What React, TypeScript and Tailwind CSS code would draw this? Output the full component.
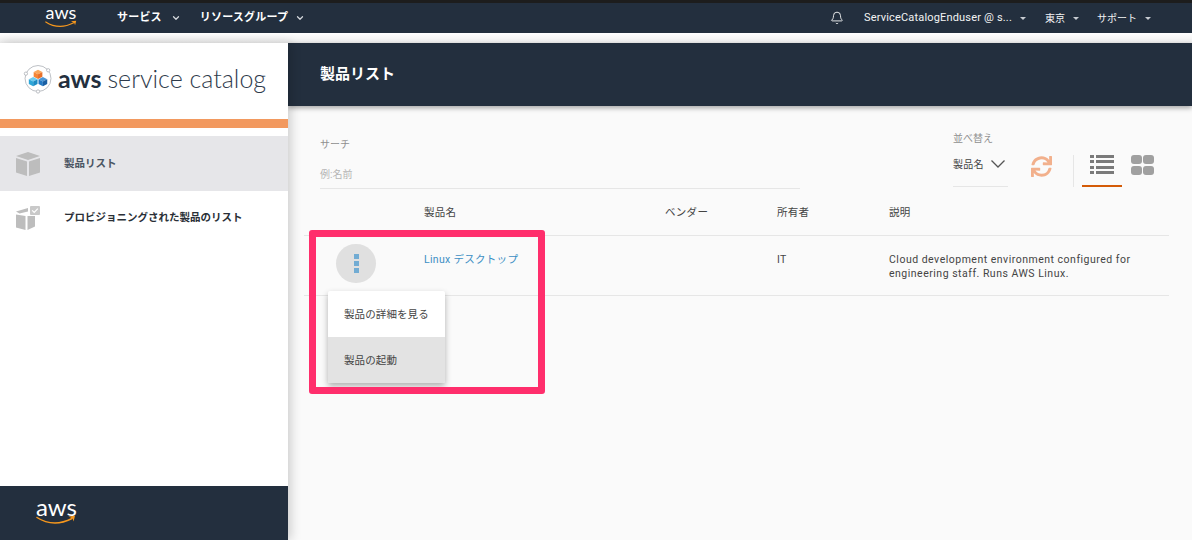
import { Bell, ChevronDown } from 'lucide-react'
import { FaSync } from 'react-icons/fa'

const font = { jp: "font-['Roboto','Noto_Sans_CJK_JP',sans-serif]" }

function Caret() {
  return <span className="ml-[8px] inline-block h-0 w-0 border-x-[3px] border-t-[3px] border-x-transparent border-t-[#c8ccd2]" />
}

function Smile({ className }: { className: string }) {
  return (
    <svg viewBox="0 0 40 10" className={className} fill="none">
      <path d="M1 2.5C7 6.5 13 8 19 8c6 0 11-1.5 17-4.5" stroke="#f7981d" strokeWidth="1.5" strokeLinecap="round" />
      <path d="M32.5 1.6 39 .8 37.6 6.6 36.6 3.6z" fill="#f7981d" />
    </svg>
  )
}

function AwsLogo({ big }: { big?: boolean }) {
  return (
    <div className={big ? 'relative h-[26px] w-[40px]' : 'relative h-[22px] w-[32px]'}>
      <span
        className={`absolute left-0 right-0 text-center font-['Lato',sans-serif] leading-none text-white ${
          big ? 'top-[-5px] text-[24px]' : 'top-[-4px] text-[18px]'
        }`}
      >
        aws
      </span>
      <Smile className={big ? 'absolute left-0 top-[15px] h-[10px] w-[40px]' : 'absolute left-0 top-[13px] h-[8px] w-[32px]'} />
    </div>
  )
}

function Cube({ x, y, top, left, right }: { x: number; y: number; top: string; left: string; right: string }) {
  return (
    <g transform={`translate(${x} ${y})`}>
      <path d="M0-4.5 4.5-2.2 0 0-4.5-2.2z" fill={top} />
      <path d="M-4.5-2.2 0 0V5L-4.5 2.8z" fill={left} />
      <path d="M4.5-2.2 0 0V5L4.5 2.8z" fill={right} />
    </g>
  )
}

function CatalogMark() {
  return (
    <svg viewBox="0 0 32 32" className="h-[31px] w-[31px] shrink-0">
      <circle cx="15.5" cy="16" r="13.4" fill="none" stroke="#a9aeb4" strokeWidth="0.8" />
      <circle cx="3" cy="11" r="1.7" fill="#fff" stroke="#a9aeb4" strokeWidth="0.8" />
      <circle cx="26" cy="7.5" r="1.7" fill="#fff" stroke="#a9aeb4" strokeWidth="0.8" />
      <circle cx="15.5" cy="29.4" r="1.7" fill="#fff" stroke="#a9aeb4" strokeWidth="0.8" />
      <Cube x={15.5} y={11.5} top="#f9a65a" left="#f58536" right="#e8702a" />
      <Cube x={10.5} y={19} top="#6fcbee" left="#2ea6d8" right="#1c8cc4" />
      <Cube x={20.5} y={19} top="#4a97d6" left="#2379c4" right="#1a5fa3" />
    </svg>
  )
}

function BoxIcon() {
  return (
    <svg viewBox="0 0 24 24" className="h-[24px] w-[24px]" fill="#bdbdbd">
      <path d="M12 0 24 4 12 8 0 4z" />
      <path d="M0 6 11 9.6V24L0 20.4z" />
      <path d="M24 6 13 9.6V24l11-3.6z" />
    </svg>
  )
}

function BoxCheckIcon() {
  return (
    <svg viewBox="0 0 24 24" className="h-[24px] w-[24px]" fill="#bdbdbd">
      <path d="M0 5.5 12 2v3.5L3.5 7.4z" />
      <path d="M0 8.5 9.5 10v14L0 21.5z" />
      <path d="M11.5 10 H19 V20.5L11.5 24z" />
      <rect x="14" y="0" width="10" height="9" rx="1" fill="#c9c9c9" />
      <path d="M16.2 4.4 18.2 6.4 21.8 2.6" fill="none" stroke="#fff" strokeWidth="1.2" />
    </svg>
  )
}

function ListIcon() {
  return (
    <div className="flex w-[24px] flex-col gap-[2.3px]">
      {[0, 1, 2, 3].map((i) => (
        <div key={i} className="flex h-[3px] gap-[2px]">
          <div className="w-[4px] bg-[#7a7a7a]" />
          <div className="flex-1 bg-[#7a7a7a]" />
        </div>
      ))}
    </div>
  )
}

function GridIcon() {
  return (
    <div className="grid w-[23px] grid-cols-2 gap-[1.5px]">
      {[0, 1, 2, 3].map((i) => (
        <div key={i} className="h-[9px] rounded-[3px] bg-[#a0a0a0]" />
      ))}
    </div>
  )
}

export default function App() {
  return (
    <div className={`flex h-[540px] w-[1192px] flex-col overflow-hidden bg-white ${font.jp} text-[#333]`}>
      <div className="h-[3px] shrink-0 bg-[#1d1d1d]" />
      <header className="flex h-[30px] shrink-0 items-center bg-[#232f3e] text-white">
        <div className="ml-[45px] mt-[-1px]">
          <AwsLogo />
        </div>
        <div className="ml-[40px] flex items-center text-[11px] font-bold tracking-[0.2px]">
          サービス
          <ChevronDown size={10} strokeWidth={3} className="ml-[9px] text-[#d5d8dc]" />
        </div>
        <div className="ml-[19px] flex items-center text-[11px] font-bold tracking-[0.2px]">
          リソースグループ
          <ChevronDown size={10} strokeWidth={3} className="ml-[7px] text-[#d5d8dc]" />
        </div>
        <div className="ml-auto flex items-center pr-[41px] text-[10px] text-[#f2f3f3]">
          <Bell size={14} strokeWidth={1.6} className="mr-[20px]" />
          <span className="text-[11px] tracking-[0.17px]">ServiceCatalogEnduser @ s...</span>
          <Caret />
          <span className="ml-[19px]">東京</span>
          <Caret />
          <span className="ml-[18px]">サポート</span>
          <Caret />
        </div>
      </header>
      <div className="h-[10px] shrink-0 bg-gradient-to-b from-white to-[#ededed]" />

      <div className="flex min-h-0 flex-1">
        <aside className="z-10 flex w-[288px] shrink-0 flex-col bg-white shadow-[3px_0_10px_rgba(0,0,0,0.18)]">
          <div className="flex h-[76px] items-center pb-[5px] pl-[23px]">
            <CatalogMark />
            <span className="ml-[4px] whitespace-nowrap font-['Lato',sans-serif] text-[25px] leading-none text-[#2f3b4c]">
              <span className="font-bold text-[#232f3e]">aws</span>
              <span className="ml-[6px] font-light">service catalog</span>
            </span>
          </div>
          <div className="h-[9px] bg-[#f2995f]" />
          <nav className="mt-[8px] text-[10.5px] font-bold">
            <div className="flex h-[55px] items-center bg-[#e6e6e9] pl-[16px] text-[#4b5563]">
              <BoxIcon />
              <span className="ml-[24px]">製品リスト</span>
            </div>
            <div className="flex h-[54px] items-center pl-[16px] text-[#2a2f36]">
              <BoxCheckIcon />
              <span className="ml-[24px]">プロビジョニングされた製品のリスト</span>
            </div>
          </nav>
          <div className="mt-auto flex h-[54px] items-center bg-[#232f3e] pl-[36px]">
            <AwsLogo big />
          </div>
        </aside>

        <main className="relative flex min-w-0 flex-1 flex-col bg-[#fafafa]">
          <div className="flex h-[63px] shrink-0 items-center bg-[#232f3e] pl-[32px] text-[15px] font-bold text-white shadow-[0_2px_5px_rgba(0,0,0,0.35)]">
            製品リスト
          </div>

          <div className="flex h-[86px] shrink-0 pl-[32px]">
            <div className="mt-[31px] h-[52px] w-[480px] border-b border-[#e6e6e6] text-[10px]">
              <div className="text-[#8f8f8f]">サーチ</div>
              <div className="mt-[15px] text-[#b5b5b5]">例:名前</div>
            </div>
            <div className="ml-[153px] mt-[25px] w-[55px]">
              <div className="text-[10px] leading-[15px] text-[#8f8f8f]">並べ替え</div>
              <div className="mt-[11px] flex h-[30px] items-start border-b border-[#e6e6e6] text-[10px] leading-[16px] tracking-[0.2px] text-[#444]">
                製品名
                <svg viewBox="0 0 14 8" className="ml-[7px] mt-[3px] h-[8px] w-[14px] shrink-0" fill="none" stroke="#555" strokeWidth="1.3">
                  <path d="M.5.5 7 7 13.5.5" />
                </svg>
              </div>
            </div>
            <div className="ml-[23px] mt-[50px] h-[21px]">
              <FaSync size={21} className="text-[#f2b08c]" />
            </div>
            <div className="ml-[21px] mt-[49px] h-[32px] w-px bg-[#e6e6e6]" />
            <div className="ml-[8px] mt-[47px] flex h-[34px] w-[40px] justify-center border-b-[2px] border-[#d45b07] pt-[2px]">
              <ListIcon />
            </div>
            <div className="ml-[9px] mt-[49px]">
              <GridIcon />
            </div>
          </div>

          <div className="ml-[16px] mr-[23px] text-[10.5px] tracking-[0.3px] text-[#444]">
            <div className="grid h-[44px] grid-cols-[120px_241px_112px_112px_1fr] items-center border-b border-[#e6e6e6] pb-[1px]">
              <div />
              <div>製品名</div>
              <div>ベンダー</div>
              <div>所有者</div>
              <div>説明</div>
            </div>
            <div className="grid h-[60px] grid-cols-[120px_241px_112px_112px_1fr] border-b border-[#e6e6e6]">
              <div className="pl-[32px] pt-[8px]">
                <div className="flex h-[39px] w-[40px] flex-col items-center justify-center gap-[2px] rounded-full bg-[#e0e0e0]">
                  <div className="h-[5px] w-[5px] bg-[#72acd3]" />
                  <div className="h-[5px] w-[5px] bg-[#72acd3]" />
                  <div className="h-[5px] w-[5px] bg-[#72acd3]" />
                </div>
              </div>
              <div className="pt-[16px] text-[#3d8fc4]">Linux デスクトップ</div>
              <div />
              <div className="pt-[16px]">IT</div>
              <div className="pt-[17px] leading-[14px] tracking-[0.5px]">
                Cloud development environment configured for
                <br />
                engineering staff. Runs AWS Linux.
              </div>
            </div>
          </div>

          <div className="absolute left-[40px] top-[248px] z-20 w-[117px] overflow-hidden rounded-[2px] bg-white text-[10.5px] tracking-[0.1px] text-[#444] shadow-[0_3px_6px_rgba(0,0,0,0.3)]">
            <div className="flex h-[46px] items-center pl-[16px] pt-[1px]">製品の詳細を見る</div>
            <div className="flex h-[46px] items-center bg-[#e3e3e3] pl-[16px] pt-[1px]">製品の起動</div>
          </div>
          <div className="absolute left-[21px] top-[187px] z-30 h-[164px] w-[236px] rounded-[3px] border-[7px] border-[#ff2e6c]" />
        </main>
      </div>
    </div>
  )
}
